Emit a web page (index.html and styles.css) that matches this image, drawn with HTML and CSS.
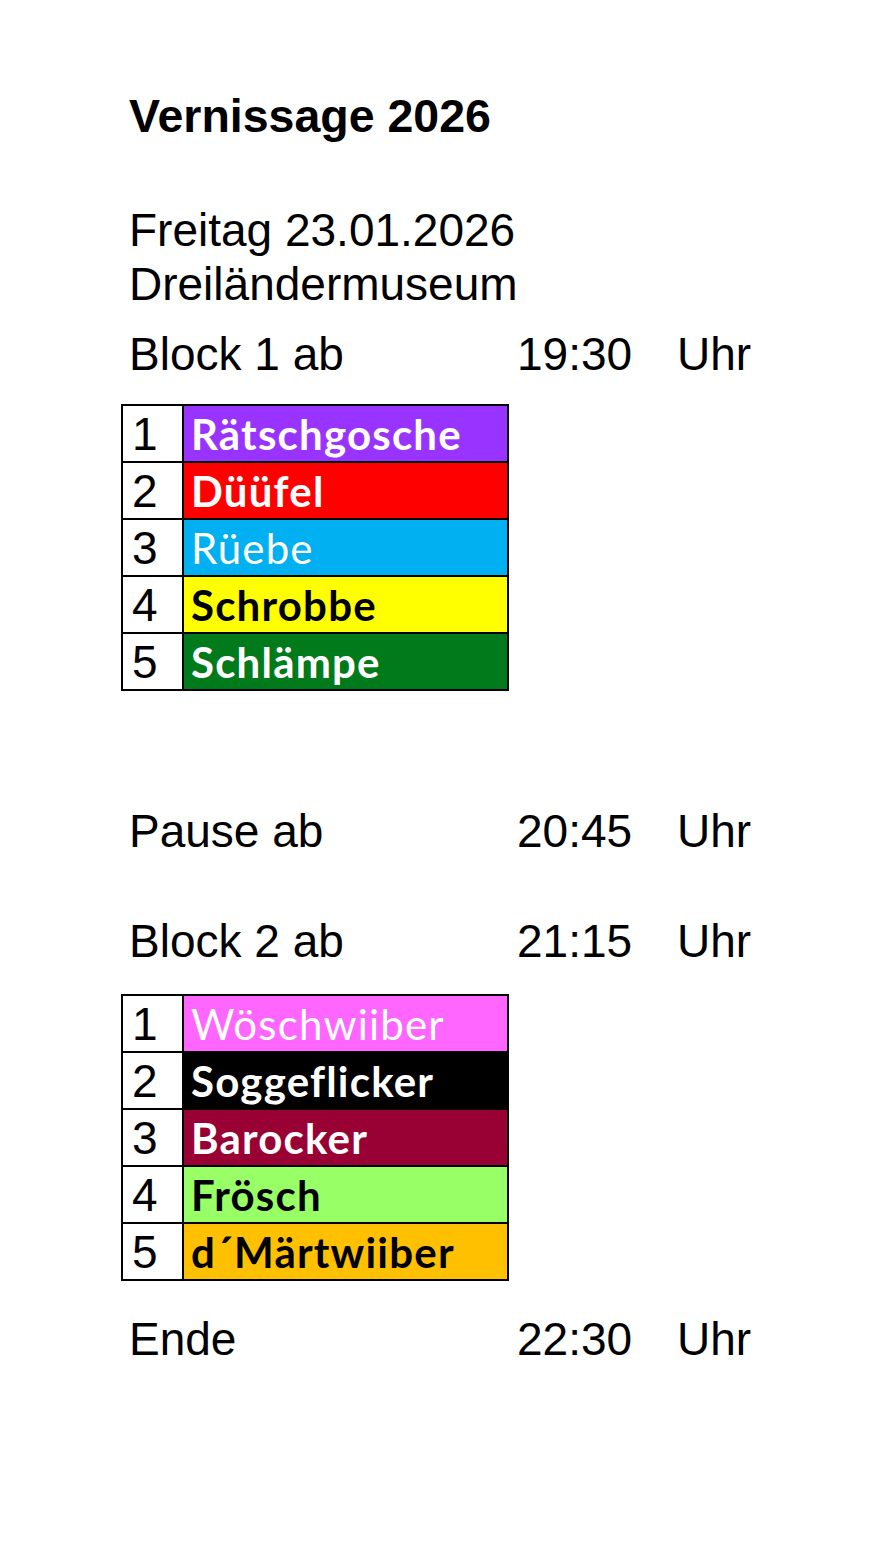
FILE: index.html
```html
<!DOCTYPE html>
<html lang="de">
<head>
<meta charset="utf-8">
<title>Vernissage 2026</title>
<link rel="stylesheet" href="styles.css">
</head>
<body>
<main class="page">
  <h1 class="title">Vernissage 2026</h1>
  <div class="info">
    <p class="line">Freitag 23.01.2026</p>
    <p class="line">Dreiländermuseum</p>
  </div>

  <div class="slot slot-block1">
    <span class="slot-label">Block 1 ab</span>
    <span class="slot-time">19:30</span>
    <span class="slot-unit">Uhr</span>
  </div>

  <table class="groups groups-1">
    <tr><td class="num">1</td><td class="name c-purple">Rätschgosche</td></tr>
    <tr><td class="num">2</td><td class="name c-red">Düüfel</td></tr>
    <tr><td class="num">3</td><td class="name c-blue light">Rüebe</td></tr>
    <tr><td class="num">4</td><td class="name c-yellow">Schrobbe</td></tr>
    <tr><td class="num">5</td><td class="name c-green">Schlämpe</td></tr>
  </table>

  <div class="slot slot-pause">
    <span class="slot-label">Pause ab</span>
    <span class="slot-time">20:45</span>
    <span class="slot-unit">Uhr</span>
  </div>

  <div class="slot slot-block2">
    <span class="slot-label">Block 2 ab</span>
    <span class="slot-time">21:15</span>
    <span class="slot-unit">Uhr</span>
  </div>

  <table class="groups groups-2">
    <tr><td class="num">1</td><td class="name c-pink light">Wöschwiiber</td></tr>
    <tr><td class="num">2</td><td class="name c-black">Soggeflicker</td></tr>
    <tr><td class="num">3</td><td class="name c-maroon">Barocker</td></tr>
    <tr><td class="num">4</td><td class="name c-lime">Frösch</td></tr>
    <tr><td class="num">5</td><td class="name c-orange">d´Märtwiiber</td></tr>
  </table>

  <div class="slot slot-end">
    <span class="slot-label">Ende</span>
    <span class="slot-time">22:30</span>
    <span class="slot-unit">Uhr</span>
  </div>
</main>
</body>
</html>
```

FILE: styles.css
```css
html, body {
  margin: 0;
  padding: 0;
  background: #ffffff;
}

body {
  font-family: "Liberation Sans", Arial, sans-serif;
  color: #000000;
  width: 872px;
  min-height: 1551px;
}

.page {
  padding: 89px 0 0 129px;
}

.title {
  margin: 0;
  font-size: 46.5px;
  line-height: 54px;
  font-weight: 700;
}

.info {
  margin-top: 60px;
}

.line {
  margin: 0;
  font-size: 46px;
  line-height: 54px;
}

.slot {
  display: grid;
  grid-template-columns: 388px 160px auto;
  font-size: 46px;
  line-height: 54px;
}

.slot-block1 { margin-top: 16px; }
.slot-pause { margin-top: 113px; }
.slot-block2 { margin-top: 56px; }
.slot-end { margin-top: 31px; }

.groups {
  border-collapse: collapse;
  margin-left: -8px;
  width: 388px;
}

.groups-1 { margin-top: 23px; }
.groups-2 { margin-top: 26px; }

.groups td {
  border: 2px solid #000000;
  height: 55px;
  padding: 0;
  vertical-align: middle;
}

.num {
  width: 50px;
  background: #ffffff;
  font-size: 46px;
  line-height: 50px;
  padding-left: 9px !important;
}

.name {
  font-family: Lato, "Noto Sans", sans-serif;
  font-weight: 700;
  font-size: 42px;
  letter-spacing: 1.2px;
  line-height: 50px;
  padding-left: 7px !important;
  color: #ffffff;
}

.name.light { font-weight: 400; }

.c-purple { background: #9933ff; }
.c-red { background: #ff0000; }
.c-blue { background: #00b0f0; }
.c-yellow { background: #ffff00; color: #000000; }
.c-green { background: #007a1a; }
.c-pink { background: #ff66ff; }
.c-black { background: #000000; }
.c-maroon { background: #990033; }
.c-lime { background: #99ff66; color: #000000; }
.c-orange { background: #ffc000; color: #000000; }
```
